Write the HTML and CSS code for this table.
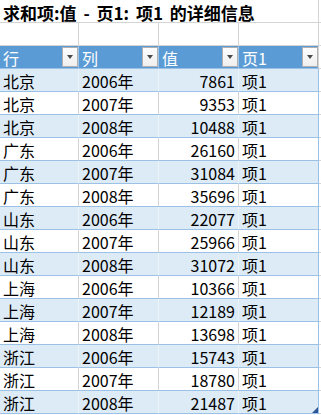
FILE: index.html
```html
<!DOCTYPE html>
<html lang="zh-CN">
<head>
<meta charset="utf-8">
<title>求和项:值 - 页1: 项1 的详细信息</title>
<link rel="stylesheet" href="styles.css">
</head>
<body>
<div class="sheet">
  <div class="row title-row">
    <div class="cell title">求和项:值 - 页1: 项1 的详细信息</div>
    <div class="cell spare"></div>
  </div>
  <div class="row blank-row">
    <div class="cell"></div><div class="cell"></div><div class="cell"></div><div class="cell"></div><div class="cell spare"></div>
  </div>
  <div class="row head-row">
    <div class="cell head"><span>行</span><span class="dd"></span></div>
    <div class="cell head"><span>列</span><span class="dd"></span></div>
    <div class="cell head"><span>值</span><span class="dd"></span></div>
    <div class="cell head"><span>页1</span><span class="dd"></span></div>
    <div class="cell spare"></div>
  </div>
  <div class="row data band"><div class="cell">北京</div><div class="cell">2006年</div><div class="cell num">7861</div><div class="cell">项1</div><div class="cell spare"></div></div>
  <div class="row data"><div class="cell">北京</div><div class="cell">2007年</div><div class="cell num">9353</div><div class="cell">项1</div><div class="cell spare"></div></div>
  <div class="row data band"><div class="cell">北京</div><div class="cell">2008年</div><div class="cell num">10488</div><div class="cell">项1</div><div class="cell spare"></div></div>
  <div class="row data"><div class="cell">广东</div><div class="cell">2006年</div><div class="cell num">26160</div><div class="cell">项1</div><div class="cell spare"></div></div>
  <div class="row data band"><div class="cell">广东</div><div class="cell">2007年</div><div class="cell num">31084</div><div class="cell">项1</div><div class="cell spare"></div></div>
  <div class="row data"><div class="cell">广东</div><div class="cell">2008年</div><div class="cell num">35696</div><div class="cell">项1</div><div class="cell spare"></div></div>
  <div class="row data band"><div class="cell">山东</div><div class="cell">2006年</div><div class="cell num">22077</div><div class="cell">项1</div><div class="cell spare"></div></div>
  <div class="row data"><div class="cell">山东</div><div class="cell">2007年</div><div class="cell num">25966</div><div class="cell">项1</div><div class="cell spare"></div></div>
  <div class="row data band"><div class="cell">山东</div><div class="cell">2008年</div><div class="cell num">31072</div><div class="cell">项1</div><div class="cell spare"></div></div>
  <div class="row data"><div class="cell">上海</div><div class="cell">2006年</div><div class="cell num">10366</div><div class="cell">项1</div><div class="cell spare"></div></div>
  <div class="row data band"><div class="cell">上海</div><div class="cell">2007年</div><div class="cell num">12189</div><div class="cell">项1</div><div class="cell spare"></div></div>
  <div class="row data"><div class="cell">上海</div><div class="cell">2008年</div><div class="cell num">13698</div><div class="cell">项1</div><div class="cell spare"></div></div>
  <div class="row data band"><div class="cell">浙江</div><div class="cell">2006年</div><div class="cell num">15743</div><div class="cell">项1</div><div class="cell spare"></div></div>
  <div class="row data"><div class="cell">浙江</div><div class="cell">2007年</div><div class="cell num">18780</div><div class="cell">项1</div><div class="cell spare"></div></div>
  <div class="row data band last"><div class="cell">浙江</div><div class="cell">2008年</div><div class="cell num">21487</div><div class="cell handle-cell">项1<span class="handle"></span></div><div class="cell spare"></div></div>
</div>
</body>
</html>
```

FILE: styles.css
```css
* { box-sizing: border-box; }
html, body {
  margin: 0;
  padding: 0;
  background: #ffffff;
}
body {
  font-family: "Noto Sans CJK SC", "Noto Sans", sans-serif;
  font-size: 16px;
  color: #000000;
  overflow: hidden;
}
.sheet {
  width: 321px;
}
.row {
  display: grid;
  grid-template-columns: 79px 80px 80px 80px 2px;
  height: 23px;
}
.cell {
  height: 23px;
  padding: 2px 3px 0 3px;
  line-height: 20px;
  white-space: nowrap;
  overflow: hidden;
  border-right: 1px solid #d4d4d4;
  border-bottom: 1px solid #d4d4d4;
}
.cell.spare {
  padding: 0;
  border-right: none;
}
.title-row .title {
  grid-column: 1 / span 4;
  font-weight: bold;
  font-size: 17px;
  word-spacing: 3px;
  padding-top: 2px;
  line-height: 21px;
  overflow: visible;
}
.head-row .head {
  display: flex;
  justify-content: space-between;
  align-items: flex-start;
  background: #5b9bd5;
  color: #ffffff;
  border-right-color: #9fc4e6;
  border-bottom-color: #9bc2e6;
  padding-right: 0;
}
.head-row .head:nth-child(4) {
  border-right-color: #d4d4d4;
}
.dd {
  width: 16px;
  height: 20px;
  margin-top: -1px;
  border: 1px solid #b0b0b0;
  background: linear-gradient(#fdfdfd, #efefef);
  display: flex;
  align-items: center;
  justify-content: center;
}
.dd::after {
  content: "";
  width: 0;
  height: 0;
  border-left: 3.5px solid transparent;
  border-right: 3.5px solid transparent;
  border-top: 4px solid #4a4a4a;
}
.data .cell {
  border-bottom-color: #9bc2e6;
}
.data .cell:nth-child(4) {
  border-right-color: #9bc2e6;
}
.data .cell.spare {
  border-bottom-color: #d4d4d4;
}
.data.band .cell {
  background: #ddebf7;
  border-right-color: #eaf2fa;
}
.data.band .cell:nth-child(4) {
  border-right-color: #9bc2e6;
}
.data.band .cell.spare {
  background: #ffffff;
}
.num {
  text-align: right;
}
.handle-cell {
  position: relative;
}
.handle {
  position: absolute;
  right: 0;
  bottom: 0;
  width: 0;
  height: 0;
  border-left: 6px solid transparent;
  border-bottom: 6px solid #2f5597;
}
```
